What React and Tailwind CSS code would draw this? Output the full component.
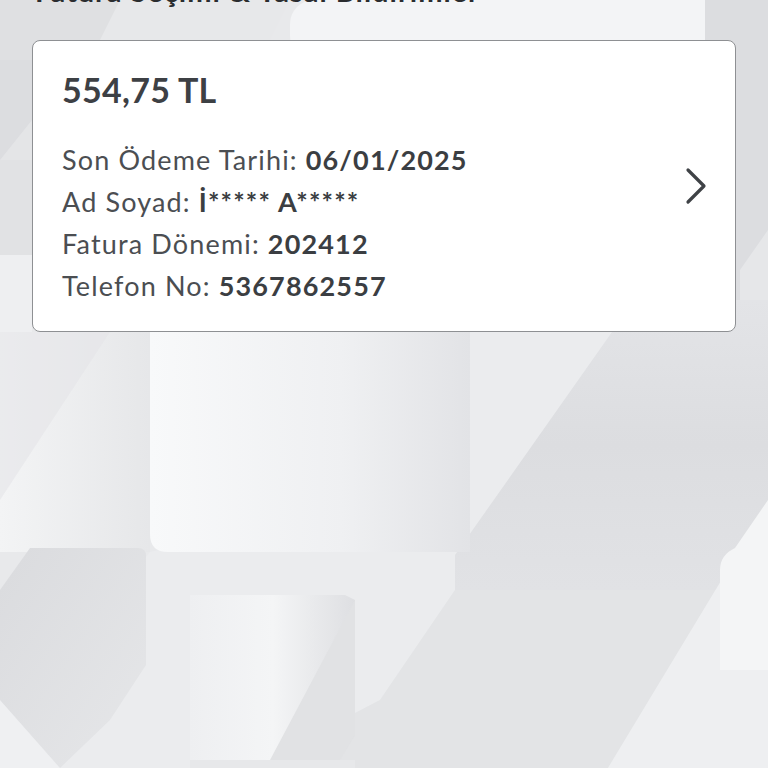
import React from 'react';

function Backdrop() {
  return (
    <svg className="absolute inset-0" width="768" height="768" viewBox="0 0 768 768">
      <defs>
        <linearGradient id="lightRect" x1="0" y1="0" x2="1" y2="0">
          <stop offset="0" stopColor="#f8f9fa" />
          <stop offset="0.6" stopColor="#eff0f2" />
          <stop offset="1" stopColor="#e2e3e6" />
        </linearGradient>
        <linearGradient id="darkRect" x1="0" y1="0" x2="0" y2="1">
          <stop offset="0" stopColor="#e3e4e7" />
          <stop offset="0.5" stopColor="#dcdde0" />
          <stop offset="1" stopColor="#e1e2e5" />
        </linearGradient>
        <linearGradient id="leftBlock" x1="0" y1="0" x2="1" y2="1">
          <stop offset="0" stopColor="#dadbde" />
          <stop offset="1" stopColor="#e6e7e9" />
        </linearGradient>
        <linearGradient id="smallBlock" x1="0" y1="0" x2="1" y2="0">
          <stop offset="0" stopColor="#eeeff1" />
          <stop offset="0.5" stopColor="#f4f5f6" />
          <stop offset="1" stopColor="#dedfe2" />
        </linearGradient>
        <linearGradient id="fadeLeft" x1="0" y1="0" x2="1" y2="0">
          <stop offset="0" stopColor="#f3f4f5" />
          <stop offset="1" stopColor="#e6e7e9" />
        </linearGradient>
      </defs>
      <rect width="768" height="768" fill="#e8e9eb" />
      {/* top band */}
      <rect x="0" y="0" width="120" height="60" fill="#dfe0e2" />
      <polygon points="120,0 290,0 260,60 90,60" fill="#e7e8ea" />
      <rect x="290" y="0" width="440" height="60" rx="24" fill="#f3f4f6" />
      <rect x="705" y="0" width="63" height="340" fill="#dcdde0" />
      <polygon points="740,270 768,230 768,340 740,340" fill="#e6e7e9" />
      {/* left column beside card */}
      <rect x="0" y="60" width="32" height="100" fill="#dcdde0" />
      <polygon points="0,160 32,160 32,120" fill="#e4e5e7" />
      <rect x="0" y="160" width="32" height="95" fill="#e1e2e4" />
      <rect x="0" y="255" width="32" height="85" fill="#eeeff1" />
      {/* lower left fade */}
      <rect x="0" y="332" width="150" height="220" fill="url(#fadeLeft)" />
      <polygon points="0,500 0,332 110,332" fill="#e4e5e7" opacity="0.6" />
      {/* dark block right */}
      <rect x="455" y="300" width="313" height="290" fill="url(#darkRect)" />
      {/* diagonal light wedge */}
      <polygon points="612,332 455,555 455,590 380,700 250,768 0,768 0,740 150,552 455,480 455,332" fill="#ebecee" />
      {/* big light rounded block */}
      <path d="M150 300 H470 V552 H168 Q150 552 150 534 Z" fill="url(#lightRect)" />
      {/* bottom right region */}
      <polygon points="455,590 768,590 768,503 608,768 250,768 380,700" fill="#e3e4e6" />
      <polygon points="768,503 768,768 608,768" fill="#eeeff1" />
      <path d="M720 570 Q720 555 735 548 L768 500 V670 H720 Z" fill="#f4f5f6" />
      {/* left lower block */}
      <path d="M30 548 H138 Q146 548 146 556 V665 L110 720 L60 768 H0 V590 Z" fill="url(#leftBlock)" />
      <polygon points="0,700 60,768 0,768" fill="#eff0f2" />
      {/* small block */}
      <path d="M190 595 H345 L355 600 V735 L340 760 H190 Z" fill="url(#smallBlock)" />
      <polygon points="355,600 355,735 340,760 270,760" fill="#e1e2e4" />
      <rect x="190" y="760" width="165" height="8" fill="#e7e8ea" />
    </svg>
  );
}

function Row({ label, value }) {
  return (
    <div className="leading-[42px] text-[27px] tracking-[1.15px] whitespace-nowrap">
      <span className="text-[#4b4e52]">{label} </span>
      <span className="font-bold text-[#3b3e42]">{value}</span>
    </div>
  );
}

export default function App() {
  return (
    <div className="relative w-[768px] h-[768px] overflow-hidden" style={{ fontFamily: 'Lato, "Open Sans", sans-serif' }}>
      <Backdrop />
      <div className="relative px-8">
        <h1 className="-mt-[26px] pl-[3px] text-[29px] leading-[34px] font-bold tracking-[1px] text-[#2a2c2f] whitespace-nowrap">
          Fatura Seçimi &amp; Yasal Bildirimler
        </h1>

        <div className="mt-[32px] h-[292px] bg-white rounded-[8px] border-[1.5px] border-[#8e9093] flex items-center justify-between pl-[29px] pr-[28px]">
          <div className="self-start pt-[29px]">
            <div className="text-[34px] leading-[40px] font-bold tracking-[0.3px] text-[#3d4044]">554,75 TL</div>
            <div className="mt-[29px]">
              <Row label="Son Ödeme Tarihi:" value="06/01/2025" />
              <Row label="Ad Soyad:" value="İ***** A*****" />
              <Row label="Fatura Dönemi:" value="202412" />
              <Row label="Telefon No:" value="5367862557" />
            </div>
          </div>
          <svg width="22" height="38" viewBox="0 0 22 38" fill="none" stroke="#3f4246" strokeWidth="3.2" strokeLinecap="round" strokeLinejoin="round">
            <path d="M3 3 L19 19 L3 35" />
          </svg>
        </div>
      </div>
    </div>
  );
}
